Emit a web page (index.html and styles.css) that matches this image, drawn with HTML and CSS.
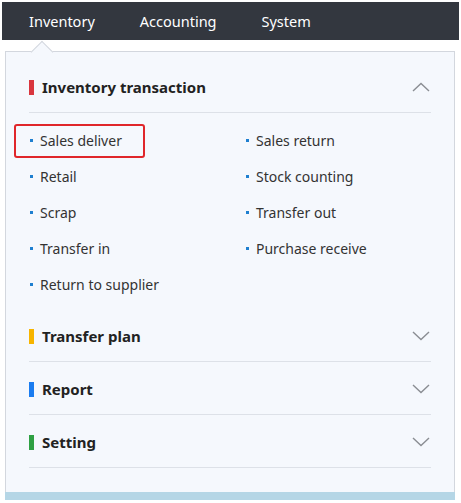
FILE: index.html
```html
<!DOCTYPE html>
<html lang="en">
<head>
    <meta charset="UTF-8">
    <meta name="viewport" content="width=device-width, initial-scale=1.0">
    <title>Inventory menu</title>
    <link rel="stylesheet" href="styles.css">
</head>
<body>

    <!-- top navigation -->
    <div class="topbar">
        <span class="nav-item">Inventory</span>
        <span class="nav-item">Accounting</span>
        <span class="nav-item">System</span>
    </div>

    <!-- dropdown panel -->
    <div class="panel">
        <div class="section">
            <div class="section-head">
                <span class="mark red"></span>
                <span class="section-title">Inventory transaction</span>
                <svg class="chev" width="18" height="10" viewBox="0 0 18 10"><polyline points="1,9 9,1.5 17,9" fill="none" stroke="#8a8d93" stroke-width="1.4"/></svg>
            </div>
            <div class="items">
                <div class="item hl">Sales deliver</div>
                <div class="item">Sales return</div>
                <div class="item">Retail</div>
                <div class="item">Stock counting</div>
                <div class="item">Scrap</div>
                <div class="item">Transfer out</div>
                <div class="item">Transfer in</div>
                <div class="item">Purchase receive</div>
                <div class="item">Return to supplier</div>
            </div>
        </div>

        <div class="section">
            <div class="section-head">
                <span class="mark yellow"></span>
                <span class="section-title">Transfer plan</span>
                <svg class="chev" width="18" height="10" viewBox="0 0 18 10"><polyline points="1,1 9,8.5 17,1" fill="none" stroke="#8a8d93" stroke-width="1.4"/></svg>
            </div>
        </div>

        <div class="section">
            <div class="section-head">
                <span class="mark blue"></span>
                <span class="section-title">Report</span>
                <svg class="chev" width="18" height="10" viewBox="0 0 18 10"><polyline points="1,1 9,8.5 17,1" fill="none" stroke="#8a8d93" stroke-width="1.4"/></svg>
            </div>
        </div>

        <div class="section">
            <div class="section-head">
                <span class="mark green"></span>
                <span class="section-title">Setting</span>
                <svg class="chev" width="18" height="10" viewBox="0 0 18 10"><polyline points="1,1 9,8.5 17,1" fill="none" stroke="#8a8d93" stroke-width="1.4"/></svg>
            </div>
        </div>

        <div class="panel-foot"></div>
    </div>

</body>
</html>
```

FILE: styles.css
```css
body { margin: 0; background: #fff; font-family: "Noto Sans", "Open Sans", sans-serif; color: #333; }
.topbar { display: flex; gap: 45px; align-items: center; height: 38px; margin: 2px 2px 0 2px; padding-left: 27px; background-color: #33373f; }
.nav-item { color: #fff; font-size: 14.5px; }

.panel { position: relative; margin: 11px 6px 0 5px; padding: 10px 23px 0 23px; background-color: #f5f8fd; border: 1px solid #d3d7de; border-bottom: none; }
/* small pointer above the panel */
.panel::before { content: ""; position: absolute; top: -8px; left: 28px; width: 15px; height: 15px; background-color: #f5f8fd; border-top: 1px solid #d3d7de; border-left: 1px solid #d3d7de; transform: rotate(45deg); }

.section { border-bottom: 1px solid #dde1e8; }
.section + .section { margin-top: 2px; }
.section-head { display: flex; align-items: center; height: 50px; }
.section:first-child .section-head { border-bottom: 1px solid #dde1e8; }
.mark { width: 5px; height: 15px; margin-right: 8px; }
.mark.red { background-color: #d9363e; }
.mark.yellow { background-color: #f7b500; }
.mark.blue { background-color: #1a7cf0; }
.mark.green { background-color: #2ea043; }
.section-title { flex: 1; font-size: 15px; font-weight: bold; color: #222; }
.chev { margin-right: 1px; }

.items { display: grid; grid-template-columns: 216px 1fr; padding: 10px 0 6px 0; }
.section:first-child { border-bottom: none; }
.item { position: relative; display: flex; align-items: center; height: 36px; padding-bottom: 1px; box-sizing: border-box; font-size: 14px; color: #333; }
.item::before { content: ""; width: 3px; height: 3px; margin: 0 7px 0 1px; background-color: #1e7fd0; }
.item.hl::after { content: ""; position: absolute; left: -15px; top: 1px; width: 127px; height: 30px; border: 2px solid #e0262b; border-radius: 3px; }

.panel-foot { height: 8px; margin: 24px -24px 0 -24px; background-color: #b5d6e6; }
```
